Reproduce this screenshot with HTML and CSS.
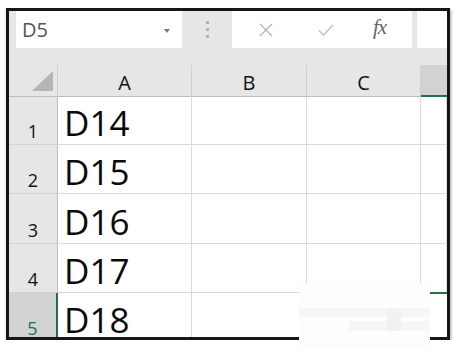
FILE: index.html
```html
<!DOCTYPE html>
<html lang="en">
<head>
    <meta charset="UTF-8">
    <title>Sheet</title>
    <link rel="stylesheet" href="styles.css">
</head>
<body>
    <div class="window">
        <div class="formula-bar">
            <div class="name-box">
                <span>D5</span>
                <span class="drop"></span>
            </div>
            <div class="grip">
                <i></i><i></i><i></i>
            </div>
            <div class="buttons">
                <svg class="btn" width="16" height="16" viewBox="0 0 16 16">
                    <path d="M2 2 L14 14 M14 2 L2 14" stroke="#b4b4b4" stroke-width="1.3" fill="none"/>
                </svg>
                <svg class="btn" width="18" height="16" viewBox="0 0 18 16">
                    <path d="M2 8.5 L6.5 13 L16 3" stroke="#c4c4c4" stroke-width="1.6" fill="none"/>
                </svg>
                <span class="fx">fx</span>
            </div>
            <div class="input"></div>
        </div>

        <div class="grid">
            <div class="corner"><span class="tri"></span></div>
            <div class="col">A</div>
            <div class="col">B</div>
            <div class="col">C</div>
            <div class="col active"></div>

            <div class="row">1</div>
            <div class="cell">D14</div>
            <div class="cell"></div>
            <div class="cell"></div>
            <div class="cell"></div>

            <div class="row">2</div>
            <div class="cell">D15</div>
            <div class="cell"></div>
            <div class="cell"></div>
            <div class="cell"></div>

            <div class="row">3</div>
            <div class="cell">D16</div>
            <div class="cell"></div>
            <div class="cell"></div>
            <div class="cell"></div>

            <div class="row">4</div>
            <div class="cell">D17</div>
            <div class="cell"></div>
            <div class="cell"></div>
            <div class="cell"></div>

            <div class="row active">5</div>
            <div class="cell">D18</div>
            <div class="cell"></div>
            <div class="cell"></div>
            <div class="cell selected"></div>
        </div>
    </div>

    <!-- blurred watermark patch -->
    <div class="patch">
        <span class="p1"></span>
        <span class="p2"></span>
        <span class="p3"></span>
    </div>
</body>
</html>
```

FILE: styles.css
```css
body {
    margin: 0;
    background: #fff;
    font-family: 'Open Sans', 'Liberation Sans', sans-serif;
}

.window {
    margin: 8px 0 0 6px;
    width: 444px;
    height: 332px;
    border: 3px solid #161616;
    box-sizing: border-box;
    overflow: hidden;
    background: #e6e6e6;
    box-shadow: 1px 2px 3px rgba(0, 0, 0, 0.35);
}

.formula-bar {
    display: flex;
    height: 37px;
}

.name-box {
    margin-left: 7px;
    width: 166px;
    background: #fff;
    display: flex;
    align-items: center;
    justify-content: space-between;
    padding: 0 12px 0 6px;
    box-sizing: border-box;
    font-size: 20px;
    color: #555;
}

.drop {
    width: 0;
    height: 0;
    border-left: 3.5px solid transparent;
    border-right: 3.5px solid transparent;
    border-top: 4px solid #7a7a7a;
    margin-top: 2px;
}

.grip {
    width: 50px;
    display: flex;
    flex-direction: column;
    align-items: center;
    justify-content: center;
    gap: 4px;
}

.grip i {
    width: 3px;
    height: 3px;
    background: #b0b0b0;
}

.buttons {
    width: 180px;
    background: #fff;
    display: flex;
    align-items: center;
    box-sizing: border-box;
    padding-left: 26px;
}

.btn {
    margin-right: 43px;
}

.buttons .btn + .btn {
    margin-right: 38px;
}

.fx {
    font-family: 'Liberation Serif', serif;
    font-style: italic;
    font-size: 21px;
    color: #666;
    letter-spacing: -1px;
    margin-top: -4px;
}

.input {
    margin-left: 5px;
    flex: 1;
    background: #fff;
}

.grid {
    margin-top: 17px;
    display: grid;
    grid-template-columns: 49px 134px 115px 114px 1fr;
    grid-template-rows: 32px 48px 49px 50px 49px 49px;
}

.corner {
    border-right: 1px solid #cfcfcf;
    border-bottom: 1px solid #bdbdbd;
    display: flex;
    justify-content: flex-end;
    align-items: flex-end;
    padding: 0 4px 5px 0;
}

.tri {
    width: 0;
    height: 0;
    border-left: 21px solid transparent;
    border-bottom: 20px solid #b5b5b5;
}

.col {
    border-right: 1px solid #cfcfcf;
    border-bottom: 1px solid #bdbdbd;
    text-align: center;
    font-size: 20px;
    font-weight: 500;
    line-height: 36px;
    color: #111;
}

.col.active {
    background: #d2d2d2;
    border-bottom: 2px solid #217346;
    border-right: none;
}

.row {
    border-right: 1px solid #bdbdbd;
    border-bottom: 1px solid #d4d4d4;
    display: flex;
    justify-content: center;
    align-items: flex-end;
    padding-bottom: 3px;
    box-sizing: border-box;
    font-size: 18px;
    font-weight: 500;
    line-height: 20px;
    color: #111;
}

.row.active {
    background: #d2d2d2;
    color: #217346;
    border-right: 2px solid #217346;
}

.cell {
    background: #fff;
    border-right: 1px solid #dadada;
    border-bottom: 1px solid #dadada;
    display: flex;
    align-items: flex-end;
    padding: 0 0 1px 6px;
    box-sizing: border-box;
    font-size: 35px;
    line-height: 40px;
    color: #0a0a0a;
}

.cell.selected {
    border-top: 2px solid #217346;
    border-right: none;
    margin-top: -1px;
}

.patch {
    position: absolute;
    left: 299px;
    top: 283px;
    width: 131px;
    height: 66px;
    background: #fdfdfd;
}

.patch span {
    position: absolute;
    background: #f6f6f6;
}

.patch .p1 {
    left: 0;
    top: 25px;
    width: 131px;
    height: 9px;
}

.patch .p2 {
    left: 50px;
    top: 38px;
    width: 81px;
    height: 10px;
}

.patch .p3 {
    left: 88px;
    top: 26px;
    width: 14px;
    height: 22px;
    background: #f1f1f1;
}
```
